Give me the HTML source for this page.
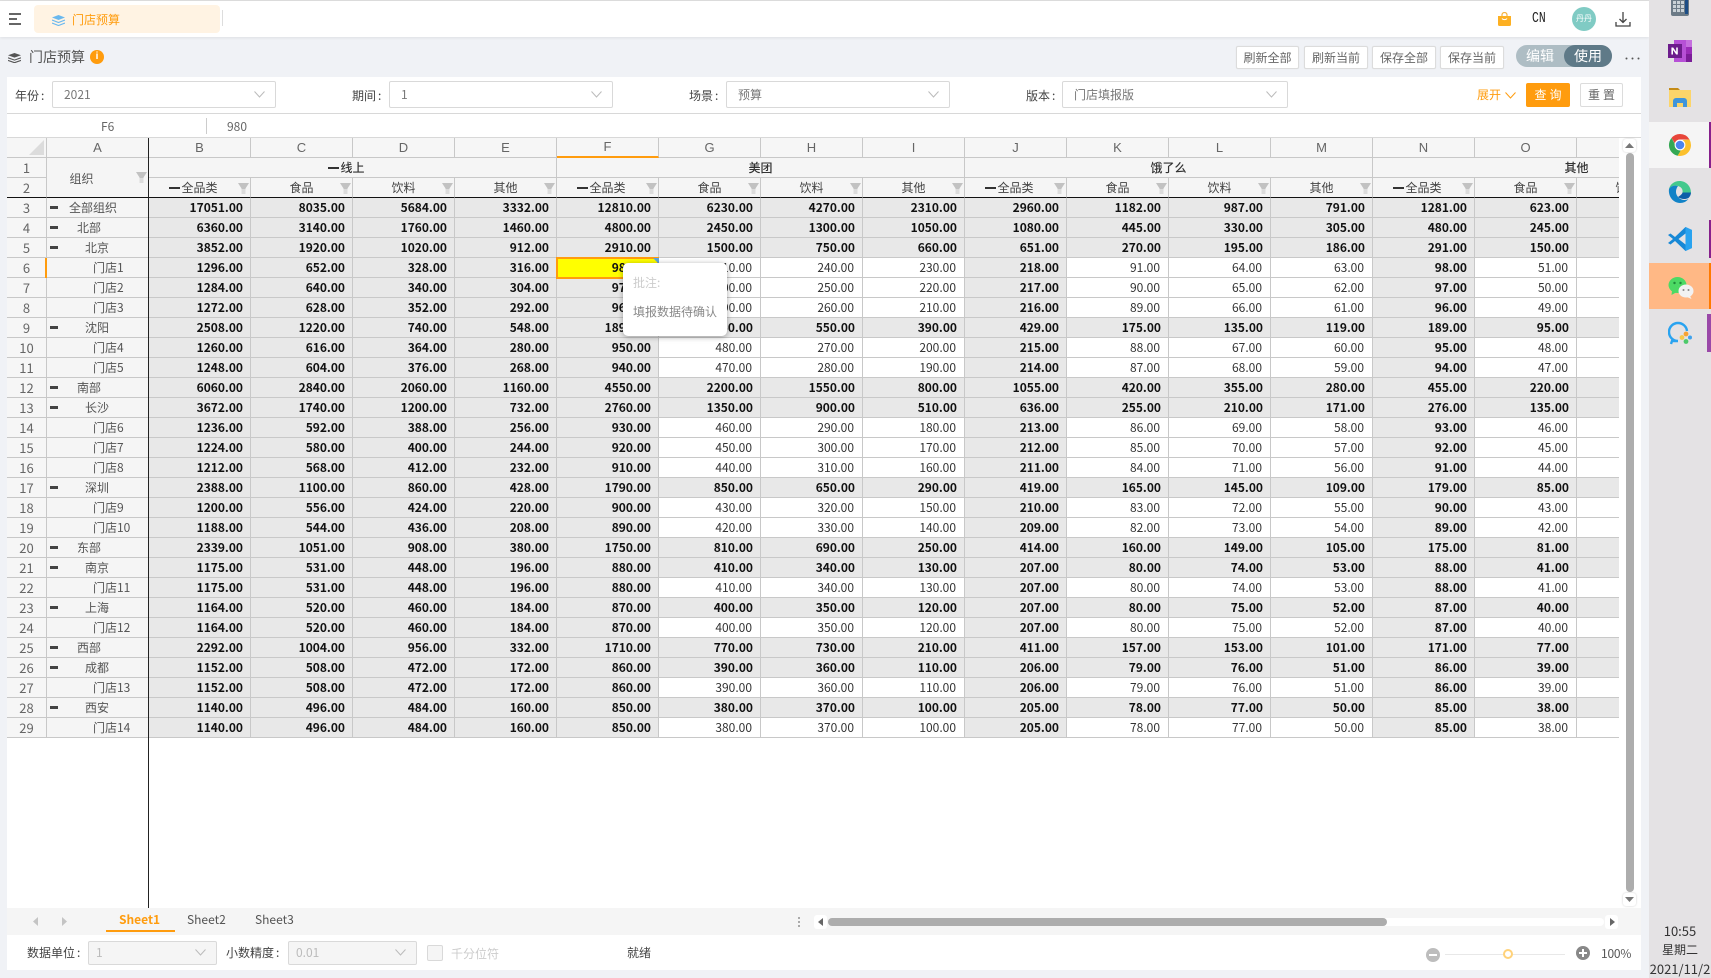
<!DOCTYPE html>
<html lang="zh"><head><meta charset="utf-8"><title>门店预算</title>
<style>
*{box-sizing:border-box}
html,body{margin:0;padding:0;width:1711px;height:978px;overflow:hidden;background:#f0f2f6;font:12px/1.2 "Noto Sans CJK SC","Liberation Sans",sans-serif;color:#555}
div,span.p{position:absolute}
#top{left:0;top:1px;width:1649px;height:36px;background:#fff;box-shadow:0 1px 3px rgba(0,0,0,.08)}
#line0{left:0;top:0;width:1649px;height:1px;background:#dedede}
#tab{left:34px;top:5px;width:186px;height:28px;background:#fff3e3;border-radius:4px}
.txt{white-space:nowrap;line-height:18px}
.btn{top:46px;height:23px;background:#fff;border:1px solid #dcdcdc;border-radius:2px;text-align:center;line-height:21px;color:#666;box-shadow:0 0 1px rgba(0,0,0,.08)}
#filter{left:7px;top:77px;width:1634px;height:37px;background:#fff;border-bottom:1px solid #d8d8d8}
#fbar{left:7px;top:114px;width:1634px;height:24px;background:#fff;border-bottom:1px solid #d8d8d8}
.sel{height:27px;top:81px;background:#fff;border:1px solid #d9d9d9;border-radius:2px;line-height:25px;padding-left:11px;color:#777}
.sel svg{position:absolute;right:10px;top:9px}
.lab{top:87px;color:#444}
.lab u,.col{text-decoration:none;margin-left:2px}
#sheet{left:7px;top:138px;width:1612px;height:770px;overflow:hidden;background:#fff}
#bgw{left:7px;top:138px;width:1634px;height:770px;background:#fff}
table{border-collapse:separate;border-spacing:0;table-layout:fixed;width:1774px;position:absolute;left:0;top:0}
td{height:20px;padding:0 8px 0 0;border-right:1px solid #c8c8c8;border-bottom:1px solid #c8c8c8;text-align:right;font-size:12px;line-height:18px;color:#333;white-space:nowrap;overflow:hidden;position:relative;background:#fff}
td.r{background:#f6f6f6;color:#666;text-align:center;padding:0;font-size:13px}
td.a{background:#f5f5f5;color:#555;text-align:left;padding-right:0}
td.c{background:#f6f6f6;color:#666;text-align:center;padding:0;font:13px/18px "Liberation Sans",sans-serif}
td.h{background:#f5f5f5;text-align:center;padding:0;color:#444}
tr.h2 td{border-bottom:1px solid #111}
td:nth-child(n+3):nth-child(-n+7),td:nth-child(11),td:nth-child(15),tr.n td:nth-child(n+3){background:#e8e8e8;font-weight:700;color:#111;padding-right:7px}
tr.h1 td,tr.h2 td{font-weight:400!important}
tr.h1 td:nth-child(n+3){background:#f5f5f5!important;padding-right:0!important}
tr.h1 td.h{font-weight:500!important;color:#333}
tr.h2 td:nth-child(n+2){background:#f5f5f5!important;color:#444!important;padding:0!important}
tr.cols td{background:#f6f6f6!important;font-weight:400!important;color:#666!important;padding:0!important}
td.F{background:#e4e4e4!important;border-bottom:2px solid #ff9c0e!important}
td.y{background:#ff0!important}
.d{display:inline-block;width:11px;height:2px;background:#333;vertical-align:middle;margin-left:-12px;margin-right:1px}
.f{position:absolute;right:1px;top:5px;width:11px;height:11px;background:linear-gradient(#c2c2c2 55%,#dcdcdc 55%);clip-path:polygon(0 0,100% 0,68% 50%,68% 100%,32% 100%,32% 50%)}
i.t{position:absolute;left:3px;top:8px;width:8px;height:3px;background:#444}
.l0{padding-left:22px}.l1{padding-left:30px}.l2{padding-left:38px}.l3{padding-left:46px}
#tabs{left:7px;top:908px;width:1634px;height:27px;background:#f5f5f5}
#status{left:7px;top:935px;width:1634px;height:35px;background:#fff}
.dis{top:941px;height:24px;background:#f5f5f5;border:1px solid #d9d9d9;border-radius:2px;line-height:22px;padding-left:7px;color:#bbb}
.dis svg{position:absolute;right:10px;top:7px}
#task{left:1649px;top:0;width:62px;height:978px;background:#e4e2e4}
.ic{position:absolute}
</style></head><body>
<div id="line0"></div>
<div id="top"></div>
<svg class="ic" style="left:9px;top:13px" width="13" height="12" viewBox="0 0 13 12"><path d="M0 1h12M0 6h8M0 11h12" stroke="#333" stroke-width="1.4" fill="none"/></svg>
<div id="tab"></div>
<svg class="ic" style="left:52px;top:15px" width="13" height="11" viewBox="0 0 13 11"><path d="M6.5 0L13 2.500 6.500 5 0 2.500z" fill="#6ab8ee"/><path d="M0 5l6.500 2.500L13 5M0 8l6.500 2.500L13 8" stroke="#6ab8ee" stroke-width="1.2" fill="none"/></svg>
<div class="txt" style="left:72px;top:11px;color:#ff9c0e">门店预算</div>
<div style="left:222px;top:10px;width:1px;height:16px;background:#ddd"></div>
<svg class="ic" style="left:1498px;top:12px" width="13" height="14" viewBox="0 0 13 14"><path d="M4 4V3a2.500 2.500 0 0 1 5 0v1" stroke="#f5b342" stroke-width="1.200" fill="none"/><path d="M0 4h13v8.500a1.500 1.500 0 0 1-1.500 1.500h-10A1.500 1.500 0 0 1 0 12.500z" fill="#fdb022"/><path d="M4 6.500c1 1.500 4 1.500 5 0" stroke="#fff" stroke-width="1" fill="none"/></svg>
<div class="txt" style="left:1532px;top:10px;font:15px/18px 'Liberation Mono',monospace;color:#222;transform:scaleX(.76);transform-origin:left">CN</div>
<div style="left:1572px;top:7px;width:24px;height:24px;border-radius:50%;background:#80cbc4;color:#fff;font-size:8px;line-height:24px;text-align:center">丹丹</div>
<svg class="ic" style="left:1615px;top:12px" width="16" height="15" viewBox="0 0 16 15"><path d="M8 0v10M4.500 7L8 10.500 11.500 7M1 10v4h14v-4" stroke="#444" stroke-width="1.300" fill="none"/></svg>

<svg class="ic" style="left:8px;top:53px" width="13" height="10" viewBox="0 0 13 10"><path d="M6.500 0L13 2.300 6.500 4.600 0 2.300z" fill="#555"/><path d="M0 4.800l6.500 2.300L13 4.800M0 7.400l6.500 2.300L13 7.400" stroke="#555" stroke-width="1.100" fill="none"/></svg>
<div class="txt" style="left:29px;top:48px;font-size:14px;color:#555">门店预算</div>
<div style="left:90px;top:50px;width:14px;height:14px;border-radius:50%;background:#ff9c0e;color:#fff;font:700 10px/14px 'Liberation Sans',sans-serif;text-align:center">i</div>

<div class="btn" style="left:1236px;width:63px">刷新全部</div>
<div class="btn" style="left:1304px;width:64px">刷新当前</div>
<div class="btn" style="left:1372px;width:64px">保存全部</div>
<div class="btn" style="left:1440px;width:64px">保存当前</div>
<div style="left:1516px;top:45px;width:96px;height:22px;border-radius:11px;background:#aebdc4"></div>
<div style="left:1564px;top:45px;width:48px;height:22px;border-radius:11px;background:#5f7a88"></div>
<div class="txt" style="left:1526px;top:47px;font-size:14px;color:#fff">编辑</div>
<div class="txt" style="left:1574px;top:47px;font-size:14px;color:#fff">使用</div>
<svg class="ic" style="left:1625px;top:57px" width="15" height="3"><circle cx="1.500" cy="1.500" r="1" fill="#555"/><circle cx="7.500" cy="1.500" r="1" fill="#555"/><circle cx="13.500" cy="1.500" r="1" fill="#555"/></svg>

<div id="filter"></div>
<div class="txt lab" style="left:15px">年份<span class="col">:</span></div>
<div class="sel" style="left:52px;width:224px">2021<svg width="11" height="7" viewBox="0 0 11 7"><path d="M.5.5l5 5.500 5-5.500" stroke="#bbb" fill="none"/></svg></div>
<div class="txt lab" style="left:352px">期间<span class="col">:</span></div>
<div class="sel" style="left:389px;width:224px">1<svg width="11" height="7" viewBox="0 0 11 7"><path d="M.5.5l5 5.500 5-5.500" stroke="#bbb" fill="none"/></svg></div>
<div class="txt lab" style="left:689px">场景<span class="col">:</span></div>
<div class="sel" style="left:726px;width:224px">预算<svg width="11" height="7" viewBox="0 0 11 7"><path d="M.5.5l5 5.500 5-5.500" stroke="#bbb" fill="none"/></svg></div>
<div class="txt lab" style="left:1026px">版本<span class="col">:</span></div>
<div class="sel" style="left:1062px;width:226px">门店填报版<svg width="11" height="7" viewBox="0 0 11 7"><path d="M.5.5l5 5.500 5-5.500" stroke="#bbb" fill="none"/></svg></div>
<div class="txt" style="left:1477px;top:86px;color:#ff9c0e">展开</div>
<svg class="ic" style="left:1505px;top:92px" width="11" height="7" viewBox="0 0 11 7"><path d="M.5.5l5 5.500 5-5.500" stroke="#ff9c0e" fill="none"/></svg>
<div style="left:1526px;top:83px;width:44px;height:24px;background:#ff9c0e;border-radius:2px;color:#fff;text-align:center;line-height:24px;letter-spacing:3px;padding-left:3px">查询</div>
<div style="left:1580px;top:83px;width:43px;height:24px;background:#fff;border:1px solid #dcdcdc;border-radius:2px;color:#666;text-align:center;line-height:22px;letter-spacing:3px;padding-left:3px">重置</div>

<div id="fbar"></div>
<div class="txt" style="left:101px;top:118px;color:#666">F6</div>
<div style="left:206px;top:118px;width:1px;height:16px;background:#ccc"></div>
<div class="txt" style="left:227px;top:118px;color:#666">980</div>

<div id="bgw"></div>
<div id="sheet">
<table>
<colgroup><col style="width:40px"><col style="width:102px"><col style="width:102px"><col style="width:102px"><col style="width:102px"><col style="width:102px"><col style="width:102px"><col style="width:102px"><col style="width:102px"><col style="width:102px"><col style="width:102px"><col style="width:102px"><col style="width:102px"><col style="width:102px"><col style="width:102px"><col style="width:102px"><col style="width:102px"><col style="width:102px"></colgroup>
<tr class="cols"><td class="c"></td><td class="c">A</td><td class="c">B</td><td class="c">C</td><td class="c">D</td><td class="c">E</td><td class="c F">F</td><td class="c">G</td><td class="c">H</td><td class="c">I</td><td class="c">J</td><td class="c">K</td><td class="c">L</td><td class="c">M</td><td class="c">N</td><td class="c">O</td><td class="c"></td><td class="c"></td></tr>
<tr class="h1"><td class="r">1</td><td class="a" rowspan="2" style="border-bottom:1px solid #111;text-align:center;padding:3px 32px 0 0;font-weight:400!important">组织<span class="f" style="top:14px;right:1px"></span></td><td class="h" colspan="4"><b class="d"></b>线上</td><td class="h" colspan="4">美团</td><td class="h" colspan="4">饿了么</td><td class="h" colspan="4">其他</td></tr>
<tr class="h2"><td class="r" style="border-bottom:1px solid #111">2</td><td class="h"><b class="d"></b>全品类<span class="f"></span></td><td class="h">食品<span class="f"></span></td><td class="h">饮料<span class="f"></span></td><td class="h">其他<span class="f"></span></td><td class="h"><b class="d"></b>全品类<span class="f"></span></td><td class="h">食品<span class="f"></span></td><td class="h">饮料<span class="f"></span></td><td class="h">其他<span class="f"></span></td><td class="h"><b class="d"></b>全品类<span class="f"></span></td><td class="h">食品<span class="f"></span></td><td class="h">饮料<span class="f"></span></td><td class="h">其他<span class="f"></span></td><td class="h"><b class="d"></b>全品类<span class="f"></span></td><td class="h">食品<span class="f"></span></td><td class="h">饮料<span class="f"></span></td></tr>
<tr class="n"><td class="r">3</td><td class="a l0"><i class="t"></i>全部组织</td><td>17051.00</td><td>8035.00</td><td>5684.00</td><td>3332.00</td><td>12810.00</td><td>6230.00</td><td>4270.00</td><td>2310.00</td><td>2960.00</td><td>1182.00</td><td>987.00</td><td>791.00</td><td>1281.00</td><td>623.00</td><td></td></tr>
<tr class="n"><td class="r">4</td><td class="a l1"><i class="t"></i>北部</td><td>6360.00</td><td>3140.00</td><td>1760.00</td><td>1460.00</td><td>4800.00</td><td>2450.00</td><td>1300.00</td><td>1050.00</td><td>1080.00</td><td>445.00</td><td>330.00</td><td>305.00</td><td>480.00</td><td>245.00</td><td></td></tr>
<tr class="n"><td class="r">5</td><td class="a l2"><i class="t"></i>北京</td><td>3852.00</td><td>1920.00</td><td>1020.00</td><td>912.00</td><td>2910.00</td><td>1500.00</td><td>750.00</td><td>660.00</td><td>651.00</td><td>270.00</td><td>195.00</td><td>186.00</td><td>291.00</td><td>150.00</td><td></td></tr>
<tr><td class="r">6</td><td class="a l3">门店1</td><td>1296.00</td><td>652.00</td><td>328.00</td><td>316.00</td><td class="y">980.00</td><td>510.00</td><td>240.00</td><td>230.00</td><td>218.00</td><td>91.00</td><td>64.00</td><td>63.00</td><td>98.00</td><td>51.00</td><td></td></tr>
<tr><td class="r">7</td><td class="a l3">门店2</td><td>1284.00</td><td>640.00</td><td>340.00</td><td>304.00</td><td>970.00</td><td>500.00</td><td>250.00</td><td>220.00</td><td>217.00</td><td>90.00</td><td>65.00</td><td>62.00</td><td>97.00</td><td>50.00</td><td></td></tr>
<tr><td class="r">8</td><td class="a l3">门店3</td><td>1272.00</td><td>628.00</td><td>352.00</td><td>292.00</td><td>960.00</td><td>490.00</td><td>260.00</td><td>210.00</td><td>216.00</td><td>89.00</td><td>66.00</td><td>61.00</td><td>96.00</td><td>49.00</td><td></td></tr>
<tr class="n"><td class="r">9</td><td class="a l2"><i class="t"></i>沈阳</td><td>2508.00</td><td>1220.00</td><td>740.00</td><td>548.00</td><td>1890.00</td><td>950.00</td><td>550.00</td><td>390.00</td><td>429.00</td><td>175.00</td><td>135.00</td><td>119.00</td><td>189.00</td><td>95.00</td><td></td></tr>
<tr><td class="r">10</td><td class="a l3">门店4</td><td>1260.00</td><td>616.00</td><td>364.00</td><td>280.00</td><td>950.00</td><td>480.00</td><td>270.00</td><td>200.00</td><td>215.00</td><td>88.00</td><td>67.00</td><td>60.00</td><td>95.00</td><td>48.00</td><td></td></tr>
<tr><td class="r">11</td><td class="a l3">门店5</td><td>1248.00</td><td>604.00</td><td>376.00</td><td>268.00</td><td>940.00</td><td>470.00</td><td>280.00</td><td>190.00</td><td>214.00</td><td>87.00</td><td>68.00</td><td>59.00</td><td>94.00</td><td>47.00</td><td></td></tr>
<tr class="n"><td class="r">12</td><td class="a l1"><i class="t"></i>南部</td><td>6060.00</td><td>2840.00</td><td>2060.00</td><td>1160.00</td><td>4550.00</td><td>2200.00</td><td>1550.00</td><td>800.00</td><td>1055.00</td><td>420.00</td><td>355.00</td><td>280.00</td><td>455.00</td><td>220.00</td><td></td></tr>
<tr class="n"><td class="r">13</td><td class="a l2"><i class="t"></i>长沙</td><td>3672.00</td><td>1740.00</td><td>1200.00</td><td>732.00</td><td>2760.00</td><td>1350.00</td><td>900.00</td><td>510.00</td><td>636.00</td><td>255.00</td><td>210.00</td><td>171.00</td><td>276.00</td><td>135.00</td><td></td></tr>
<tr><td class="r">14</td><td class="a l3">门店6</td><td>1236.00</td><td>592.00</td><td>388.00</td><td>256.00</td><td>930.00</td><td>460.00</td><td>290.00</td><td>180.00</td><td>213.00</td><td>86.00</td><td>69.00</td><td>58.00</td><td>93.00</td><td>46.00</td><td></td></tr>
<tr><td class="r">15</td><td class="a l3">门店7</td><td>1224.00</td><td>580.00</td><td>400.00</td><td>244.00</td><td>920.00</td><td>450.00</td><td>300.00</td><td>170.00</td><td>212.00</td><td>85.00</td><td>70.00</td><td>57.00</td><td>92.00</td><td>45.00</td><td></td></tr>
<tr><td class="r">16</td><td class="a l3">门店8</td><td>1212.00</td><td>568.00</td><td>412.00</td><td>232.00</td><td>910.00</td><td>440.00</td><td>310.00</td><td>160.00</td><td>211.00</td><td>84.00</td><td>71.00</td><td>56.00</td><td>91.00</td><td>44.00</td><td></td></tr>
<tr class="n"><td class="r">17</td><td class="a l2"><i class="t"></i>深圳</td><td>2388.00</td><td>1100.00</td><td>860.00</td><td>428.00</td><td>1790.00</td><td>850.00</td><td>650.00</td><td>290.00</td><td>419.00</td><td>165.00</td><td>145.00</td><td>109.00</td><td>179.00</td><td>85.00</td><td></td></tr>
<tr><td class="r">18</td><td class="a l3">门店9</td><td>1200.00</td><td>556.00</td><td>424.00</td><td>220.00</td><td>900.00</td><td>430.00</td><td>320.00</td><td>150.00</td><td>210.00</td><td>83.00</td><td>72.00</td><td>55.00</td><td>90.00</td><td>43.00</td><td></td></tr>
<tr><td class="r">19</td><td class="a l3">门店10</td><td>1188.00</td><td>544.00</td><td>436.00</td><td>208.00</td><td>890.00</td><td>420.00</td><td>330.00</td><td>140.00</td><td>209.00</td><td>82.00</td><td>73.00</td><td>54.00</td><td>89.00</td><td>42.00</td><td></td></tr>
<tr class="n"><td class="r">20</td><td class="a l1"><i class="t"></i>东部</td><td>2339.00</td><td>1051.00</td><td>908.00</td><td>380.00</td><td>1750.00</td><td>810.00</td><td>690.00</td><td>250.00</td><td>414.00</td><td>160.00</td><td>149.00</td><td>105.00</td><td>175.00</td><td>81.00</td><td></td></tr>
<tr class="n"><td class="r">21</td><td class="a l2"><i class="t"></i>南京</td><td>1175.00</td><td>531.00</td><td>448.00</td><td>196.00</td><td>880.00</td><td>410.00</td><td>340.00</td><td>130.00</td><td>207.00</td><td>80.00</td><td>74.00</td><td>53.00</td><td>88.00</td><td>41.00</td><td></td></tr>
<tr><td class="r">22</td><td class="a l3">门店11</td><td>1175.00</td><td>531.00</td><td>448.00</td><td>196.00</td><td>880.00</td><td>410.00</td><td>340.00</td><td>130.00</td><td>207.00</td><td>80.00</td><td>74.00</td><td>53.00</td><td>88.00</td><td>41.00</td><td></td></tr>
<tr class="n"><td class="r">23</td><td class="a l2"><i class="t"></i>上海</td><td>1164.00</td><td>520.00</td><td>460.00</td><td>184.00</td><td>870.00</td><td>400.00</td><td>350.00</td><td>120.00</td><td>207.00</td><td>80.00</td><td>75.00</td><td>52.00</td><td>87.00</td><td>40.00</td><td></td></tr>
<tr><td class="r">24</td><td class="a l3">门店12</td><td>1164.00</td><td>520.00</td><td>460.00</td><td>184.00</td><td>870.00</td><td>400.00</td><td>350.00</td><td>120.00</td><td>207.00</td><td>80.00</td><td>75.00</td><td>52.00</td><td>87.00</td><td>40.00</td><td></td></tr>
<tr class="n"><td class="r">25</td><td class="a l1"><i class="t"></i>西部</td><td>2292.00</td><td>1004.00</td><td>956.00</td><td>332.00</td><td>1710.00</td><td>770.00</td><td>730.00</td><td>210.00</td><td>411.00</td><td>157.00</td><td>153.00</td><td>101.00</td><td>171.00</td><td>77.00</td><td></td></tr>
<tr class="n"><td class="r">26</td><td class="a l2"><i class="t"></i>成都</td><td>1152.00</td><td>508.00</td><td>472.00</td><td>172.00</td><td>860.00</td><td>390.00</td><td>360.00</td><td>110.00</td><td>206.00</td><td>79.00</td><td>76.00</td><td>51.00</td><td>86.00</td><td>39.00</td><td></td></tr>
<tr><td class="r">27</td><td class="a l3">门店13</td><td>1152.00</td><td>508.00</td><td>472.00</td><td>172.00</td><td>860.00</td><td>390.00</td><td>360.00</td><td>110.00</td><td>206.00</td><td>79.00</td><td>76.00</td><td>51.00</td><td>86.00</td><td>39.00</td><td></td></tr>
<tr class="n"><td class="r">28</td><td class="a l2"><i class="t"></i>西安</td><td>1140.00</td><td>496.00</td><td>484.00</td><td>160.00</td><td>850.00</td><td>380.00</td><td>370.00</td><td>100.00</td><td>205.00</td><td>78.00</td><td>77.00</td><td>50.00</td><td>85.00</td><td>38.00</td><td></td></tr>
<tr><td class="r">29</td><td class="a l3">门店14</td><td>1140.00</td><td>496.00</td><td>484.00</td><td>160.00</td><td>850.00</td><td>380.00</td><td>370.00</td><td>100.00</td><td>205.00</td><td>78.00</td><td>77.00</td><td>50.00</td><td>85.00</td><td>38.00</td><td></td></tr>
</table>
</div>
<svg class="ic" style="left:29px;top:140px" width="15" height="15"><path d="M15 0v15H0z" fill="#dcdcdc"/></svg>
<div style="left:148px;top:138px;width:1px;height:770px;background:#222"></div>
<div style="left:45px;top:258px;width:2px;height:20px;background:#ff9c0e"></div>
<div style="left:556px;top:257px;width:103px;height:22px;border:2px solid #ff9c0e"></div>
<svg class="ic" style="left:653px;top:258px" width="6" height="6"><path d="M0 0h6v6z" fill="#5aa6e0"/></svg>
<div style="left:623px;top:263px;width:104px;height:73px;background:#fff;border-radius:5px;box-shadow:0 1px 6px rgba(0,0,0,.35)"></div>
<div class="txt" style="left:633px;top:274px;color:#ccc">批注:</div>
<div class="txt" style="left:633px;top:303px;color:#888">填报数据待确认</div>

<div style="left:1623px;top:139px;width:13px;height:13px;background:#fff;border-radius:3px;box-shadow:0 0 2px rgba(0,0,0,.2)"></div>
<svg class="ic" style="left:1625px;top:143px" width="9" height="5"><path d="M0 5L4.500 0 9 5z" fill="#777"/></svg>
<div style="left:1626px;top:153px;width:8px;height:739px;background:#adadad;border-radius:4px"></div>
<div style="left:1623px;top:893px;width:13px;height:13px;background:#fff;border-radius:3px;box-shadow:0 0 2px rgba(0,0,0,.2)"></div>
<svg class="ic" style="left:1625px;top:897px" width="9" height="5"><path d="M0 0L4.500 5 9 0z" fill="#777"/></svg>

<div id="tabs"></div>
<svg class="ic" style="left:33px;top:917px" width="5" height="9"><path d="M5 0L0 4.500 5 9z" fill="#c4c4c4"/></svg>
<svg class="ic" style="left:62px;top:917px" width="5" height="9"><path d="M0 0L5 4.500 0 9z" fill="#c4c4c4"/></svg>
<div class="txt" style="left:119px;top:911px;font-weight:700;color:#ff9c0e">Sheet1</div>
<div style="left:106px;top:930px;width:69px;height:2px;background:#ff9c0e"></div>
<div class="txt" style="left:187px;top:911px;color:#555">Sheet2</div>
<div class="txt" style="left:255px;top:911px;color:#555">Sheet3</div>
<svg class="ic" style="left:798px;top:917px" width="3" height="11"><rect width="2" height="2" fill="#aaa"/><rect y="4" width="2" height="2" fill="#aaa"/><rect y="8" width="2" height="2" fill="#aaa"/></svg>
<div style="left:828px;top:918px;width:776px;height:8px;background:#fff;border-radius:4px"></div>
<div style="left:828px;top:918px;width:559px;height:8px;background:#adadad;border-radius:4px"></div>
<div style="left:814px;top:915px;width:13px;height:14px;background:#fff;border-radius:3px"></div>
<svg class="ic" style="left:818px;top:918px" width="5" height="8"><path d="M5 0L0 4 5 8z" fill="#666"/></svg>
<div style="left:1605px;top:915px;width:13px;height:14px;background:#fff;border-radius:3px"></div>
<svg class="ic" style="left:1610px;top:918px" width="5" height="8"><path d="M0 0L5 4 0 8z" fill="#666"/></svg>

<div id="status"></div>
<div class="txt" style="left:27px;top:944px;color:#444">数据单位<span class="col">:</span></div>
<div class="dis" style="left:88px;width:129px">1<svg width="11" height="7" viewBox="0 0 11 7"><path d="M.5.5l5 5.500 5-5.500" stroke="#bbb" fill="none"/></svg></div>
<div class="txt" style="left:226px;top:944px;color:#444">小数精度<span class="col">:</span></div>
<div class="dis" style="left:288px;width:129px">0.01<svg width="11" height="7" viewBox="0 0 11 7"><path d="M.5.5l5 5.500 5-5.500" stroke="#bbb" fill="none"/></svg></div>
<div style="left:427px;top:945px;width:16px;height:16px;background:#f5f5f5;border:1px solid #d9d9d9;border-radius:2px"></div>
<div class="txt" style="left:451px;top:945px;color:#ccc">千分位符</div>
<div class="txt" style="left:627px;top:944px;color:#444">就绪</div>
<div style="left:1426px;top:948px;width:14px;height:14px;border-radius:50%;background:#bdbdbd"></div>
<div style="left:1429px;top:954px;width:8px;height:2px;background:#fff"></div>
<div style="left:1445px;top:954px;width:120px;height:1px;background:#e8e8e8"></div>
<div style="left:1503px;top:949px;width:10px;height:10px;border-radius:50%;background:#fff;border:2px solid #ffd27a"></div>
<div style="left:1576px;top:946px;width:14px;height:14px;border-radius:50%;background:#888"></div>
<div style="left:1579px;top:952px;width:8px;height:2px;background:#fff"></div>
<div style="left:1582px;top:949px;width:2px;height:8px;background:#fff"></div>
<div class="txt" style="left:1601px;top:945px;color:#555;letter-spacing:-.2px">100%</div>

<div id="task"></div>
<div style="left:1649px;top:122px;width:62px;height:46px;background:#f5f5f5"></div>
<div style="left:1709px;top:122px;width:2px;height:46px;background:#87208c"></div>
<div style="left:1709px;top:220px;width:2px;height:38px;background:#87208c"></div>
<div style="left:1649px;top:263px;width:62px;height:46px;background:#ffb885"></div>
<div style="left:1709px;top:263px;width:2px;height:46px;background:#ff7a00"></div>
<div style="left:1707px;top:314px;width:4px;height:38px;background:#9a48a8"></div>

<svg class="ic" style="left:1671px;top:0" width="18" height="16" viewBox="0 0 18 16"><path d="M0 0h18v14a2 2 0 0 1-2 2H2a2 2 0 0 1-2-2z" fill="#6b7a86"/><path d="M2 1h3v3H2zM6 1h3v3H6zM10 1h3v3h-3zM2 5h3v3H2zM6 5h3v3H6zM10 5h3v3h-3zM2 9h3v3H2zM6 9h3v3H6zM10 9h3v3h-3z" fill="#c9d1d6"/><path d="M14 0h3v14h-3z" fill="#1c4d86"/></svg>
<svg class="ic" style="left:1668px;top:40px" width="24" height="22" viewBox="0 0 24 22"><path d="M6 0h18v22H6z" fill="#b650d6"/><path d="M18 0h6v7h-6z" fill="#c56fde"/><path d="M18 7h6v7h-6z" fill="#9a2cb8"/><path d="M18 14h6v8h-6z" fill="#7b1d98"/><path d="M0 4h14v14H0z" fill="#6d1c8c"/><path d="M3.400 14.500v-7h1.800l3 4.400V7.500h1.600v7H8.200L5 10v4.500z" fill="#fff"/></svg>
<svg class="ic" style="left:1669px;top:88px" width="22" height="19" viewBox="0 0 22 19"><path d="M0 0h9l2 2H0z" fill="#c58b16"/><path d="M0 2h22v17H0z" fill="#fcd56a"/><path d="M4 19v-6a3 3 0 0 1 3-3h8a3 3 0 0 1 3 3v6h-4v-4H8v4z" fill="#3f95dc"/></svg>
<svg class="ic" style="left:1668px;top:133px" width="24" height="24" viewBox="0 0 24 24"><path d="M12 1a11 11 0 0 1 9.500 5.500H12A5.500 5.500 0 0 0 6.800 10.300L3.500 5A11 11 0 0 1 12 1z" fill="#e8463a"/><path d="M3.500 5l4.700 8.400A5.500 5.500 0 0 0 13 17.400L9.700 22.800A11 11 0 0 1 3.500 5z" fill="#34a853"/><path d="M21.500 6.500A11 11 0 0 1 9.700 22.800L14.500 14.500A5.500 5.500 0 0 0 14.800 7z" fill="#fbc02d"/><circle cx="12" cy="12" r="5.400" fill="#fff"/><circle cx="12" cy="12" r="4.300" fill="#4a84ee"/></svg>
<svg class="ic" style="left:1668px;top:180px" width="24" height="24" viewBox="0 0 24 24"><path d="M23 13C23 6 18 1 11.500 1 6 1 2 4.500 1 9c2-3 5.500-4 9-3 3.500 1 5 3.500 4.500 6.500H23z" fill="#43c98d"/><path d="M1 9C0 16 5 23 12 23c3.500 0 6.500-1.500 8.500-4-2.500 1.500-7 1.500-10-1.500C7.500 14.500 7 10 10 6 6 5 2.500 6.500 1 9z" fill="#1283c7"/><path d="M10 17c3 2.500 7.500 2.500 10.500 1 1.500-1.500 2.500-3.500 2.500-5.500h-8.500c-.5 2-2.500 3-4.500 4.500z" fill="#0c5ea8"/></svg>
<svg class="ic" style="left:1668px;top:227px" width="24" height="24" viewBox="0 0 24 24"><path d="M17.500 0L24 3v18l-6.500 3L7 14l-4.500 3.500L0 16l5-4L0 8l2.500-1.500L7 10z" fill="#1788d6"/><path d="M17.500 0L24 3v18l-6.500 3z" fill="#29a3f0"/><path d="M17.500 6.500v11l-7-5.500z" fill="#e4e2e4"/></svg>
<svg class="ic" style="left:1668px;top:275px" width="26" height="24" viewBox="0 0 26 24"><ellipse cx="9.500" cy="10" rx="9" ry="8" fill="#4cd964"/><path d="M4 16l-.5 4 4.500-2.500z" fill="#4cd964"/><circle cx="6.500" cy="8" r="1.200" fill="#1f8a3a"/><circle cx="12.500" cy="8" r="1.200" fill="#1f8a3a"/><ellipse cx="18" cy="16" rx="7.500" ry="6.500" fill="#f2f2f2"/><path d="M22 21l1.500 3-4.500-2z" fill="#f2f2f2"/><circle cx="15.500" cy="15" r="1" fill="#888"/><circle cx="20.500" cy="15" r="1" fill="#888"/></svg>
<svg class="ic" style="left:1668px;top:321px" width="24" height="24" viewBox="0 0 24 24"><path d="M10 2a9 9 0 1 0 0 18H4l-1 3" stroke="#29a3f0" stroke-width="2.400" fill="none"/><path d="M10 2a9 9 0 0 1 9 8" stroke="#29a3f0" stroke-width="2.400" fill="none"/><circle cx="18" cy="13" r="2.400" fill="#f7a233"/><circle cx="14" cy="16.500" r="2.400" fill="#f7c84a"/><circle cx="22" cy="16.500" r="2" fill="#3fa2ec"/><circle cx="18" cy="20.500" r="2.400" fill="#4cc96a"/></svg>

<div class="txt" style="left:1649px;top:922px;width:62px;text-align:center;font-size:13px;color:#333">10:55</div>
<div class="txt" style="left:1649px;top:941px;width:62px;text-align:center;font-size:12px;color:#333">星期二</div>
<div class="txt" style="left:1649px;top:960px;width:62px;text-align:center;font-size:13px;color:#333">2021/11/2</div>
</body></html>
